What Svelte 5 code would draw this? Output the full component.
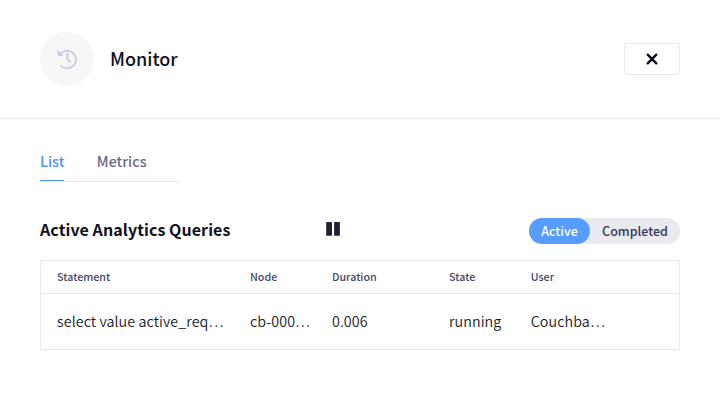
<script>
  const columns = [
    { label: 'Statement', value: 'select value active_req…', width: 193 },
    { label: 'Node', value: 'cb-000…', width: 82 },
    { label: 'Duration', value: '0.006', width: 117 },
    { label: 'State', value: 'running', width: 81.7 },
    { label: 'User', value: 'Couchba…', width: 132 }
  ];
  let view = $state('Active');
</script>

<main>
  <header>
    <div class="badge">
      <svg width="20" height="20" viewBox="0 0 20 20" fill="none" stroke="#c8cce6" stroke-width="1.8" stroke-linecap="round" stroke-linejoin="round">
        <path d="M3.2 5.2A8.8 8.8 0 1 1 4 16.8" />
        <path d="M1.1 1.9V6.3H5.5Z" fill="#c8cce6" stroke-width="1.2" />
        <path d="M10.2 5V10.3L13 12.6" stroke-width="2" />
      </svg>
    </div>
    <h1>Monitor</h1>
    <button class="close" aria-label="Close">
      <svg width="12" height="12" viewBox="0 0 12 12" stroke="#0b0d17" stroke-width="2.4" stroke-linecap="round">
        <path d="M1.7 1.7L10.3 10.3M10.3 1.7L1.7 10.3" />
      </svg>
    </button>
  </header>

  <nav>
    <a class="tab current">List</a>
    <a class="tab">Metrics</a>
  </nav>

  <section class="bar">
    <h2>Active Analytics Queries</h2>
    <svg class="pause" width="15" height="14" viewBox="0 0 15 14" fill="#1f2035">
      <rect x="0.2" width="5.8" height="13.8" rx=".6" />
      <rect x="8.1" width="5.8" height="13.8" rx=".6" />
    </svg>
    <div class="switch">
      <button class="left" class:on={view === 'Active'} onclick={() => (view = 'Active')}>Active</button>
      <button class="right" class:on={view === 'Completed'} onclick={() => (view = 'Completed')}>Completed</button>
    </div>
  </section>

  <div class="table">
    <div class="row head">
      {#each columns as c}<span style="width: {c.width}px">{c.label}</span>{/each}
    </div>
    <div class="row body">
      {#each columns as c}<span style="width: {c.width}px">{c.value}</span>{/each}
    </div>
  </div>
</main>

<style>
  :global(body) { background: #fff; }
  main {
    width: 720px;
    height: 400px;
    overflow: hidden;
    font-family: "Noto Sans CJK SC", "Noto Sans", sans-serif;
    color: #10111c;
  }
  header {
    display: flex;
    align-items: center;
    box-sizing: border-box;
    height: 119px;
    padding: 0 40px 1px;
    border-bottom: 1px solid #e9e9f0;
  }
  .badge {
    display: flex;
    align-items: center;
    justify-content: center;
    width: 54px;
    height: 54px;
    border-radius: 50%;
    background: #f7f7f7;
  }
  h1 {
    flex: 1;
    margin: 0 0 2px 16px;
    font-size: 18px;
    font-weight: 500;
    line-height: 26px;
  }
  button { border: 0; margin: 0; font: inherit; }
  .close {
    display: flex;
    align-items: center;
    justify-content: center;
    box-sizing: border-box;
    width: 56px;
    height: 32px;
    padding: 0;
    border: 1px solid #e9e9f0;
    border-radius: 3px;
    background: #fff;
  }
  nav {
    display: flex;
    gap: 32.5px;
    box-sizing: border-box;
    width: 138.5px;
    height: 33px;
    margin: 30px 0 0 40px;
    border-bottom: 1px solid #e9e9ec;
  }
  .tab {
    box-sizing: border-box;
    height: 32px;
    font-size: 14.3px;
    font-weight: 500;
    line-height: 24px;
    color: #686b86;
  }
  .current { border-bottom: 1px solid #5399ff; color: #4a94fa; }
  .bar {
    display: flex;
    align-items: center;
    height: 26px;
    margin: 36px 40px 0;
  }
  h2 {
    width: 286px;
    margin: -5px 0 0;
    font-size: 16px;
    font-weight: 700;
    line-height: 26px;
    letter-spacing: .07px;
    white-space: nowrap;
  }
  .pause { margin-top: -4px; }
  .switch {
    display: flex;
    width: 151px;
    height: 26px;
    margin-left: auto;
    border-radius: 13px;
    background: #e9e9f0;
  }
  .switch button {
    padding: 0;
    border-radius: 13px;
    background: transparent;
    font-size: 12.5px;
    font-weight: 500;
    line-height: 26px;
    color: #34375a;
  }
  .left { width: 61px; }
  .right { width: 90px; }
  .switch .on { background: #579dff; color: #fff; }
  .table {
    box-sizing: border-box;
    width: 640px;
    height: 90px;
    margin: 16px 0 0 40px;
    border: 1px solid #e9e9f0;
  }
  .row { display: flex; padding-left: 16px; }
  .row span { flex-shrink: 0; white-space: nowrap; }
  .head {
    height: 32px;
    border-bottom: 1px solid #e9e9f0;
    font-size: 10.7px;
    font-weight: 500;
    line-height: 32px;
    color: #44476a;
  }
  .body {
    font-size: 14.3px;
    font-weight: 350;
    line-height: 53px;
    letter-spacing: .08px;
    color: #181926;
  }
</style>
